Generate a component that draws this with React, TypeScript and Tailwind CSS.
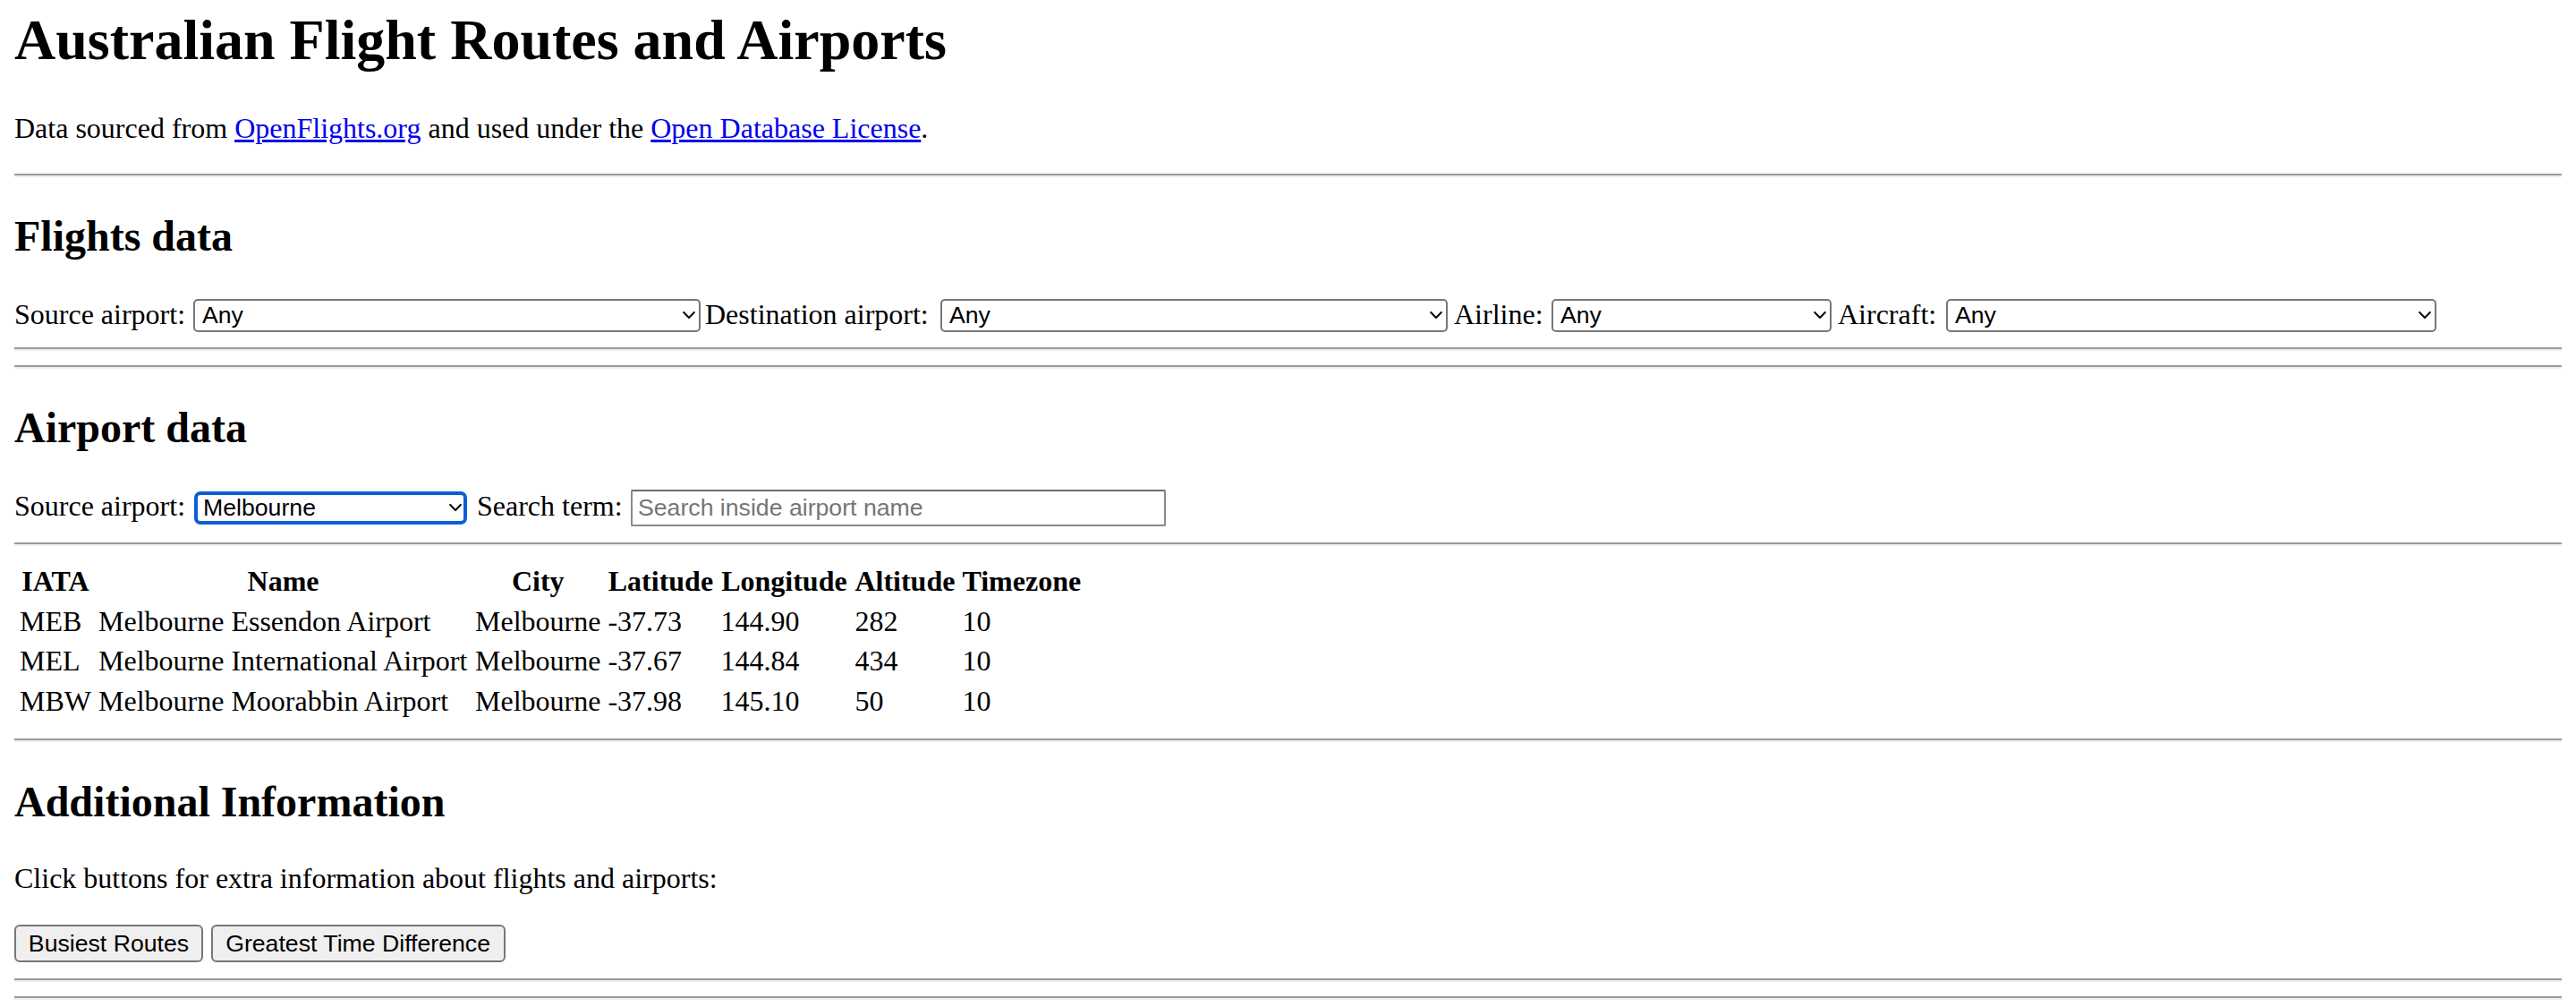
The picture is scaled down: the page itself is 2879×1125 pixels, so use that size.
import React from "react";

function Chevron() {
  return (
    <svg
      width="14"
      height="9"
      viewBox="0 0 14 9"
      className="pointer-events-none absolute right-[6px] top-1/2 -translate-y-1/2"
    >
      <path
        d="M1.2 1.4 L7 7.4 L12.8 1.4"
        fill="none"
        stroke="#111"
        strokeWidth="2.1"
        strokeLinecap="round"
        strokeLinejoin="round"
      />
    </svg>
  );
}

function Select({ className, value, focused }: { className: string; value: string; focused?: boolean }) {
  return (
    <span className={`relative inline-flex shrink-0 ${className}`}>
      <select
        defaultValue={value}
        className={
          focused
            ? "h-[37px] w-full appearance-none rounded-[7px] border-[4px] border-[#0b5fd6] bg-white py-0 pl-[6px] pr-[24px] font-['Liberation_Sans',Arial,sans-serif] text-[26.67px] leading-[29px] text-black outline-none"
            : "h-[37px] w-full appearance-none rounded-[5px] border-2 border-[#777777] bg-white py-0 pl-[8px] pr-[24px] font-['Liberation_Sans',Arial,sans-serif] text-[26.67px] leading-[29px] text-black outline-none"
        }
      >
        <option value={value}>{value}</option>
      </select>
      <Chevron />
    </span>
  );
}

function Hr({ className }: { className: string }) {
  return <div className={`h-0 border-t-2 border-b-2 border-t-[#9a9a9a] border-b-[#eeeeee] ${className}`} />;
}

const rows = [
  ["MEB", "Melbourne Essendon Airport", "Melbourne", "-37.73", "144.90", "282", "10"],
  ["MEL", "Melbourne International Airport", "Melbourne", "-37.67", "144.84", "434", "10"],
  ["MBW", "Melbourne Moorabbin Airport", "Melbourne", "-37.98", "145.10", "50", "10"],
];

export default function App() {
  return (
    <div className="min-h-[1125px] bg-white px-[16px] pb-[8px] pt-[8px] font-['Liberation_Serif','Times_New_Roman',serif] text-[32px] leading-[36.8px] text-black">
      <h1 className="text-[64px] font-bold leading-[73.6px]">Australian Flight Routes and Airports</h1>

      <p className="mt-[43.2px]">
        Data sourced from{" "}
        <a href="#" className="text-[#0000ee] underline">
          OpenFlights.org
        </a>{" "}
        and used under the{" "}
        <a href="#" className="text-[#0000ee] underline">
          Open Database License
        </a>
        .
      </p>

      <Hr className="mt-[32.4px]" />

      <h2 className="mt-[38.2px] text-[48px] font-bold leading-[55.2px]">Flights data</h2>

      <div className="mt-[42.6px] flex h-[37px] items-center whitespace-nowrap">
        <span className="mb-[2.6px] w-[200px] shrink-0">Source airport:</span>
        <Select className="w-[567px]" value="Any" />
        <span className="mb-[2.6px] w-[268px] shrink-0 pl-[5px]">Destination airport:</span>
        <Select className="w-[567px]" value="Any" />
        <span className="mb-[2.6px] w-[116px] shrink-0 pl-[7px]">Airline:</span>
        <Select className="w-[313px]" value="Any" />
        <span className="mb-[2.6px] w-[128px] shrink-0 pl-[7px]">Aircraft:</span>
        <Select className="w-[548px]" value="Any" />
      </div>

      <Hr className="mt-[17px]" />
      <Hr className="mt-[16px]" />

      <h2 className="mt-[38.2px] text-[48px] font-bold leading-[55.2px]">Airport data</h2>

      <div className="mt-[41.6px] flex h-[41px] items-center whitespace-nowrap">
        <span className="mb-[4.6px] w-[201px] shrink-0">Source airport:</span>
        <Select className="w-[305px]" value="Melbourne" focused />
        <span className="mb-[4.6px] w-[183px] shrink-0 pl-[11px]">Search term:</span>
        <input
          type="text"
          placeholder="Search inside airport name"
          className="h-[41px] w-[598px] shrink-0 rounded-[2px] border-2 border-[#8a8a8a] border-t-[#6e6e6e] bg-white px-[6px] py-0 font-['Liberation_Sans',Arial,sans-serif] text-[26.67px] leading-[29px] text-black outline-none placeholder:text-[#757575]"
        />
      </div>

      <Hr className="mt-[18px]" />

      <table className="mt-[14.8px] border-separate border-spacing-[4px] text-[32px] leading-[36.8px]">
        <thead>
          <tr>
            <th className="w-[84px] p-[2px] text-center font-bold">IATA</th>
            <th className="w-[417px] p-[2px] text-center font-bold">Name</th>
            <th className="w-[143px] p-[2px] text-center font-bold">City</th>
            <th className="w-[122px] p-[2px] text-center font-bold">Latitude</th>
            <th className="w-[146px] p-[2px] text-center font-bold">Longitude</th>
            <th className="w-[116px] p-[2px] text-center font-bold">Altitude</th>
            <th className="w-[135px] p-[2px] text-center font-bold">Timezone</th>
          </tr>
        </thead>
        <tbody>
          {rows.map((r) => (
            <tr key={r[0]}>
              {r.map((c, i) => (
                <td key={i} className="whitespace-nowrap p-[2px] text-left">
                  {c}
                </td>
              ))}
            </tr>
          ))}
        </tbody>
      </table>

      <Hr className="mt-[17px]" />

      <h2 className="mt-[39px] text-[48px] font-bold leading-[55.2px]">Additional Information</h2>

      <p className="mt-[39.84px]">Click buttons for extra information about flights and airports:</p>

      <div className="mt-[33.2px] flex items-center gap-[8.6px]">
        <button className="h-[42px] w-[211px] rounded-[6px] border-2 border-[#777777] bg-[#efefef] font-['Liberation_Sans',Arial,sans-serif] text-[26.67px] leading-none text-black">
          Busiest Routes
        </button>
        <button className="h-[42px] w-[329px] rounded-[6px] border-2 border-[#777777] bg-[#efefef] font-['Liberation_Sans',Arial,sans-serif] text-[26.67px] leading-none text-black">
          Greatest Time Difference
        </button>
      </div>

      <Hr className="mt-[18px]" />
      <Hr className="mt-[16px]" />
    </div>
  );
}
